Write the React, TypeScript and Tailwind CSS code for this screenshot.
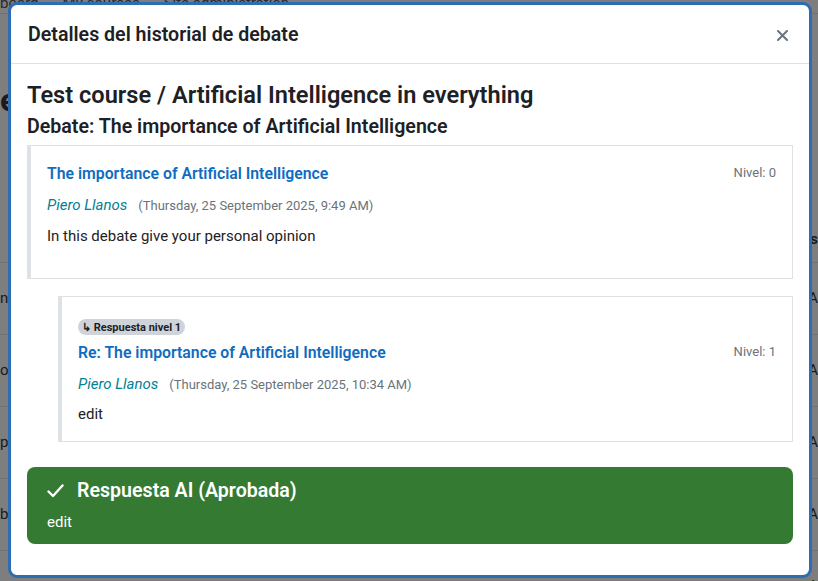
import React from "react";

const FONT = "font-['Segoe_UI',Roboto,'Noto_Sans',sans-serif]";

// dimmed page behind the dialog
function BackdropPage() {
  const rows = [
    { h: "h-[72px]", a: "nt g", b: "A" },
    { h: "h-[72px]", a: "o", b: "A" },
    { h: "h-[72px]", a: "p", b: "A" },
    { h: "h-[72px]", a: "ba", b: "A" },
    { h: "h-[72px]", a: "enemo", b: "A" },
  ];
  return (
    <div className="absolute inset-0 bg-[#7e7e7e] text-[#1a1a1a] text-[15px]">
      <div className="h-[20px] border-b border-[#707070] flex items-center gap-6 -mt-[6px] text-[#2a2a2a]">
        <span>board</span>
        <span>My courses</span>
        <span>Site administration</span>
      </div>
      <div className="h-[202px] pt-[70px] text-[32px] font-bold leading-none">e</div>
      <div className="h-[46px] flex items-center justify-end font-bold">Es</div>
      {rows.map((r, i) => (
        <div key={i} className={`${r.h} border-t border-[#727272] flex items-center justify-between`}>
          <span>{r.a}</span>
          <span>{r.b}</span>
        </div>
      ))}
    </div>
  );
}

function PostCard({
  badge,
  title,
  level,
  date,
  body,
  pb = "pb-[31px]",
}: {
  badge?: string;
  title: string;
  level: number;
  date: string;
  body: string;
  pb?: string;
}) {
  return (
    <div className={`border border-[#dee2e6] border-l-[4px] border-l-[#dee2e6] px-[16px] pt-[18px] ${pb}`}>
      {badge && (
        <div className="mt-[3px] mb-[9px] h-[16px] leading-none">
          <span className="inline-flex items-center h-[16px] px-[4px] rounded-full bg-[#ced4da] text-[#1d2125] text-[11px] font-bold leading-none">
            ↳ {badge}
          </span>
        </div>
      )}
      <div className="flex items-start justify-between">
        <a className="text-[#0f6cbf] text-[15.8px] font-semibold leading-[20px]">{title}</a>
        <span className="text-[#6a737b] text-[13px] leading-[18px]">Nivel: {level}</span>
      </div>
      <div className="mt-[10px] flex items-baseline gap-[11px]">
        <span className="italic text-[#008196] text-[15px]">Piero Llanos</span>
        <span className="text-[#6a737b] text-[13px]">({date})</span>
      </div>
      <p className="mt-[8px] text-[#1d2125] text-[15px] leading-[22px]">{body}</p>
    </div>
  );
}

export default function App() {
  return (
    <div className={`relative w-[818px] h-[581px] overflow-hidden ${FONT}`}>
      <BackdropPage />

      <div className="absolute left-[8px] top-[2px] w-[804px] h-[576px] rounded-[9px] border-[3px] border-[#2d6db3] bg-white overflow-hidden">
        <div className="h-[59px] border-b border-[#dee2e6] flex items-center justify-between pl-[17px] pr-[21px]">
          <h5 className="mt-[2px] text-[19.6px] font-semibold text-[#1d2125]">Detalles del historial de debate</h5>
          <svg width="11" height="11" viewBox="0 0 11 11" className="mt-[2px]">
            <path d="M1 1 L10 10 M10 1 L1 10" stroke="#6a737b" strokeWidth="2" strokeLinecap="round" />
          </svg>
        </div>

        <div className="px-[16px] pt-[17px]">
          <h3 className="text-[23.6px] font-semibold text-[#1d2125] leading-[28px]">
            Test course / Artificial Intelligence in everything
          </h3>
          <h4 className="mt-[6px] text-[19.6px] font-semibold text-[#1d2125] leading-[24px]">
            Debate: The importance of Artificial Intelligence
          </h4>

          <div className="mt-[6px]">
            <PostCard
              title="The importance of Artificial Intelligence"
              level={0}
              date="Thursday, 25 September 2025, 9:49 AM"
              body="In this debate give your personal opinion"
            />
          </div>

          <div className="mt-[17px] ml-[31px]">
            <PostCard
              badge="Respuesta nivel 1"
              title="Re: The importance of Artificial Intelligence"
              level={1}
              date="Thursday, 25 September 2025, 10:34 AM"
              body="edit"
              pb="pb-[16px]"
            />
          </div>

          <div className="mt-[25px] rounded-[8px] bg-[#357a32] text-white px-[20px] pt-[12px] pb-[12px]">
            <div className="flex items-center gap-[13px]">
              <svg width="17" height="14" viewBox="0 0 17 14" fill="none">
                <path d="M1.5 7.5 L6 12 L15.5 1.5" stroke="white" strokeWidth="2.4" strokeLinecap="round" strokeLinejoin="round" />
              </svg>
              <span className="text-[19.6px] font-semibold leading-[24px]">Respuesta AI (Aprobada)</span>
            </div>
            <p className="mt-[9px] text-[15px] leading-[20px]">edit</p>
          </div>
        </div>
      </div>
    </div>
  );
}
